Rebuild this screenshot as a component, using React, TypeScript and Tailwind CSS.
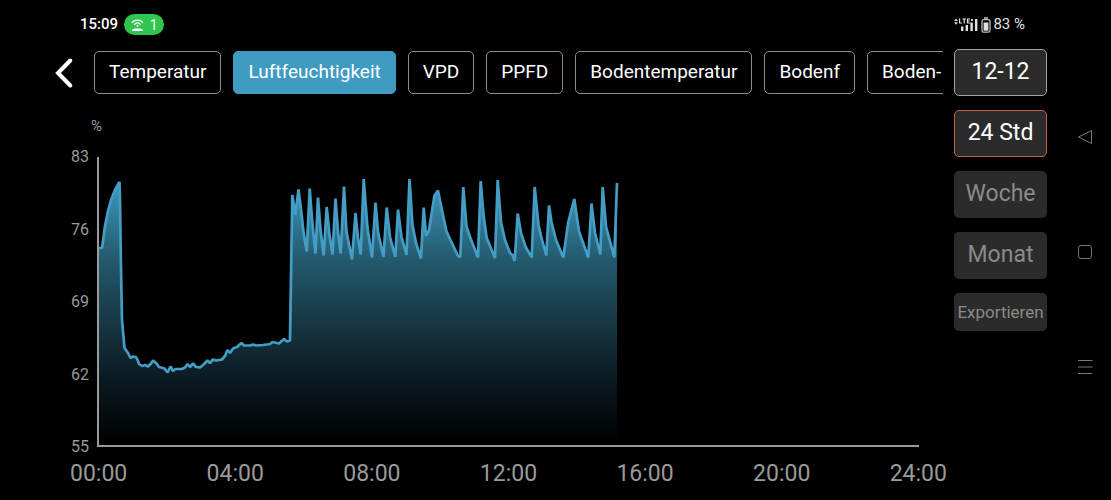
import clsx from 'clsx';

const metrics = ['Temperatur', 'Luftfeuchtigkeit', 'VPD', 'PPFD', 'Bodentemperatur', 'Bodenf', 'Boden-'];
const activeMetric = 'Luftfeuchtigkeit';

const ranges = [
  { label: '12-12', className: 'border-[#a3a3a3] text-white' },
  { label: '24 Std', className: 'border-[#c4623c] text-white' },
  { label: 'Woche', className: 'border-transparent text-[#8a8a8a]' },
  { label: 'Monat', className: 'border-transparent text-[#8a8a8a]' },
];

const yTicks = [83, 76, 69, 62, 55];
const xTicks = ['00:00', '04:00', '08:00', '12:00', '16:00', '20:00', '24:00'];

// Humidity curve, in the units of the chart's viewBox
const curve = [
  '99,248 102,248 103,241 105,226 108,211 111,200 115,190 119.5,182 120,200 121,270 122,320 124.5,348',
  '128,353 130.5,358 133,356.5 136,357 138,361 139,364 142,366 145,365 148,366.5 151,363.5 153,360.5 157,364',
  '159,367 163,368 165,369 167.5,372.5 170.5,366.5 173,371 175.5,369 182,369 185,367.5 187.5,364 190,367',
  '193,363.5 196,367 200,367.5 203,365 207.5,360.5 210,363 213,359.5 216,360.5 222,359.5 225,356 227.5,350',
  '230,353 233,348.5 237,347 241.5,343 244,345.5 250,345.5 253,344.5 256,345.5 263,345 270,344 272.5,342',
  '279,343.5 284,339 287,341.5 290,340.5 292.3,195 295.3,215 298.5,189.5 300.5,205 303.5,232 306.7,251.5',
  '309.7,188.5 312.5,225 315.5,253.5 318,197.5 320.5,230 323.7,255.5 326.7,207 329.5,235 332.5,254.5 335.5,198.5',
  '338,232 340.7,253.5 344,186.5 346.5,232 352,259.5 355.5,213 358,238 360.7,254.5 363.7,179 367.5,228 372,257.5',
  '375.5,202.5 378,232 383.5,257 386.7,207.5 390,237 395.3,257 398,209.5 401.5,237 406.5,255 409.5,179',
  '412.5,225 416,243 421,258.5 423.7,207.5 426,236 429,230 434.5,195.5 438,190.5 441.5,208 446.5,231.5 450,239',
  '458,256 460.3,257 463.3,187 466.5,226.5 470,237 478,257.5 480.7,181 483.5,215 486.7,238 495,258 497.7,180',
  '501,222 505,240 510,253 512.5,255 514.7,261 517.7,213.5 521,233 525.7,247 531.7,257.5 534.7,187 538.5,225',
  '541.5,238 546.3,255.5 549,205.5 551.5,222 556,240 563.3,257.5 568.3,222 574.3,199 579,231.5 588.3,257.5',
  '591.5,203.5 595,233 600.3,254.5 602.7,187 606,226.5 614.3,257.5 617,183',
].join(' ');

function StatusBar() {
  return (
    <header className="flex h-[49px] items-center justify-between pl-20 pr-[86px]">
      <div className="flex items-center gap-1.5 text-[15px]">
        <span className="font-medium">15:09</span>
        <span className="flex h-[21px] w-10 items-center justify-center gap-1.5 rounded-full bg-[#2fc54f] text-sm">
          <svg width="13" height="14" viewBox="0 0 13 14" fill="none" stroke="white" strokeWidth="1.3" strokeLinecap="round">
            <path d="M1.2 4.2a7.6 7.6 0 0 1 10.6 0M3.6 6.2a4.4 4.4 0 0 1 5.8 0" />
            <circle cx="6.5" cy="7.8" r="1" fill="white" stroke="none" />
            <path d="M3.5 10.5h6l2.5 1.2v1.3H1v-1.3z" fill="white" stroke="none" />
          </svg>
          1
        </span>
      </div>
      <div className="flex items-center gap-0.5 text-[15px] text-[#e0e0e0]">
        <svg width="25" height="16" viewBox="0 0 25 16" fill="#e0e0e0">
          <path d="M0 4l2-2.5L4 4zM0 5.2h4L2 7.7z" />
          <path d="M5.6 1.5V6H8M8.3 2H12M10.2 2v4.5M16 2h-2.5v4H16M13.5 4h2.2" fill="none" stroke="#e0e0e0" strokeWidth="1.2" />
          <path d="M17 2h1.8v2H17zM7 9.5h2.4V14H7zM11.6 8H14v6h-2.4zM16.4 5.5h2.4V14h-2.4zM21 2h2.4v12H21z" />
        </svg>
        <svg width="10" height="16" viewBox="0 0 10 16" fill="none">
          <path d="M3 1h4" stroke="#e0e0e0" strokeWidth="1.3" />
          <rect x="1" y="2.6" width="8" height="12.6" rx="1.6" stroke="#b8b8b8" strokeWidth="1.3" />
          <rect x="2.6" y="5.5" width="4.8" height="8.2" fill="#e0e0e0" />
        </svg>
        <span>83 %</span>
      </div>
    </header>
  );
}

function MetricTabs() {
  return (
    <div className="flex items-center pl-[54px] pr-1">
      <button type="button" aria-label="Zurück" className="flex h-10 w-10 shrink-0 items-center">
        <svg width="20" height="32" viewBox="0 0 20 32" fill="none" stroke="white" strokeWidth="4" strokeLinecap="round">
          <path d="M16.3 3.5L4 16l12.3 12.5" />
        </svg>
      </button>
      <nav className="flex min-w-0 flex-1 gap-3 overflow-hidden">
        {metrics.map((metric) => (
          <button
            key={metric}
            type="button"
            className={clsx(
              'h-[43px] shrink-0 whitespace-nowrap rounded-[5px] border px-[14px] text-[19px]',
              metric === activeMetric ? 'border-[#3f9bc2] bg-[#3f9bc2]' : 'border-[#8c8c8c]'
            )}
          >
            {metric}
          </button>
        ))}
      </nav>
    </div>
  );
}

function HumidityChart() {
  return (
    <section className="pl-[70px] pt-[22px] text-[#9a9a9a]">
      <div className="pl-[21px] text-[15px] leading-5">%</div>
      <div className="mt-[11px] flex gap-2 pr-7">
        <div className="flex w-[19px] flex-col justify-between text-right text-base leading-5">
          {yTicks.map((tick) => (
            <span key={tick}>{tick}</span>
          ))}
        </div>
        <div className="my-2.5 flex-1 border-b-2 border-l-2 border-[#9a9a9a]">
          <svg viewBox="99 157 820 288" preserveAspectRatio="none" className="h-72 w-full overflow-visible">
            <defs>
              <linearGradient id="fill" gradientUnits="userSpaceOnUse" x1="0" y1="179" x2="0" y2="445">
                <stop offset="0" stopColor="#3f9bc2" />
                <stop offset="0.3" stopColor="#235a6e" />
                <stop offset="0.5" stopColor="#193d4a" />
                <stop offset="0.75" stopColor="#0b1a22" />
                <stop offset="1" stopColor="#000000" />
              </linearGradient>
            </defs>
            <polygon points={`99,445 ${curve} 617,445`} fill="url(#fill)" />
            <polyline
              points={curve}
              fill="none"
              stroke="#439dc4"
              strokeWidth="2.7"
              strokeLinejoin="bevel"
              vectorEffect="non-scaling-stroke"
            />
          </svg>
        </div>
      </div>
      <div className="flex justify-between text-[23px] leading-[34px]">
        {xTicks.map((tick) => (
          <span key={tick}>{tick}</span>
        ))}
      </div>
    </section>
  );
}

function RangeButtons() {
  return (
    <aside className="flex w-[93px] shrink-0 flex-col gap-3.5">
      {ranges.map(({ label, className }) => (
        <button
          key={label}
          type="button"
          className={clsx('h-[47px] rounded-[5px] border bg-[#2b2b2b] text-[23px]', className)}
        >
          {label}
        </button>
      ))}
      <button type="button" className="h-[38px] rounded-[5px] bg-[#2b2b2b] pt-0.5 text-[17px] text-[#8a8a8a]">
        Exportieren
      </button>
    </aside>
  );
}

function SystemNav() {
  return (
    <div className="flex w-16 shrink-0 flex-col items-center gap-[99px] pl-3 pt-20">
      <button type="button" aria-label="Back" className="h-4">
        <svg width="16" height="16" viewBox="0 0 16 16" fill="none" stroke="#777777" strokeLinejoin="round">
          <path d="M1.5 8L14.5 1.5v13z" />
        </svg>
      </button>
      <button type="button" aria-label="Home" className="h-4">
        <svg width="16" height="16" viewBox="0 0 16 16" fill="none" stroke="#777777">
          <rect x="1.5" y="1.5" width="13" height="13" rx="2.5" />
        </svg>
      </button>
      <button type="button" aria-label="Recent apps" className="h-4">
        <svg width="16" height="16" viewBox="0 0 16 16" stroke="#777777">
          <path d="M1 1.5h14.5M1 8h14.5M1 14.5h14.5" />
        </svg>
      </button>
    </div>
  );
}

export default function App() {
  return (
    <div className="min-h-screen bg-black font-[Roboto,sans-serif] text-white">
      <StatusBar />
      <main className="flex">
        <div className="mr-[7px] min-w-0 flex-1 pt-0.5">
          <MetricTabs />
          <HumidityChart />
        </div>
        <RangeButtons />
        <SystemNav />
      </main>
    </div>
  );
}
